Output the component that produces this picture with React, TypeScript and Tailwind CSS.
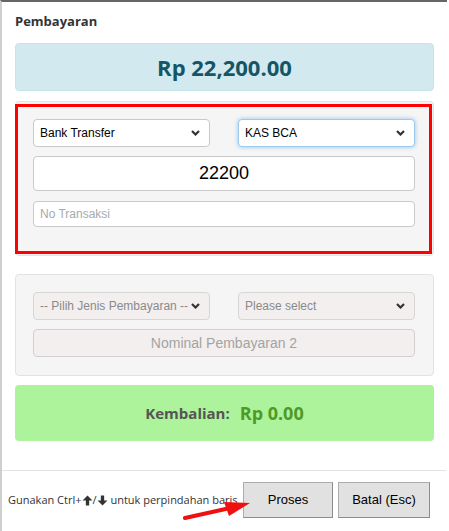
import { ReactNode } from "react";

const arial = { fontFamily: '"Liberation Sans", Arial, sans-serif' };

function Chevron() {
  return (
    <svg width="9" height="6" viewBox="0 0 9 6" className="shrink-0">
      <path d="M1 1l3.5 3.5L8 1" fill="none" stroke="#333" strokeWidth="2.2" />
    </svg>
  );
}

function FakeSelect({
  children,
  disabled,
  focused,
}: {
  children: ReactNode;
  disabled?: boolean;
  focused?: boolean;
}) {
  return (
    <div
      style={arial}
      className={
        "h-[28px] flex items-center justify-between pl-[6px] pr-[9px] rounded-[4px] border text-[12px] " +
        (disabled
          ? "bg-[#f2efee] border-[#d6d6d6] text-[#8a8a8a]"
          : focused
          ? "bg-white border-[#9ecaed] shadow-[0_0_4px_rgba(102,175,233,0.7)] text-black"
          : "bg-white border-[#c9c9c9] text-black")
      }
    >
      <span>{children}</span>
      <Chevron />
    </div>
  );
}

export default function App() {
  return (
    <div className="relative w-[449px] h-[531px] overflow-hidden bg-white">
      <div className="w-[447px] h-[531px] border-t-2 border-t-[#666] border-l-2 border-l-[#cfcfcf] flex flex-col">
        {/* Body */}
        <div className="px-[13px] pt-[9px]">
          <h4
            className="h-[20px] leading-[20px] text-[13px] font-bold text-[#333]"
            style={{ fontFamily: '"Open Sans", sans-serif' }}
          >
            Pembayaran
          </h4>

          <div
            className="mt-[12px] h-[48px] rounded-[4px] border border-[#c6e4eb] bg-[#d1e9ef] flex items-center justify-center text-[22px] font-bold text-[#155565]"
            style={{ fontFamily: '"Open Sans", sans-serif' }}
          >
            Rp 22,200.00
          </div>

          {/* Payment 1 */}
          <div className="mt-[10px] rounded-[4px] border border-[#e3e3e3] bg-[#f5f5f5] pt-[2px] pr-px pb-px">
            <div className="-ml-px border-[3px] border-[#ff0000] pt-[12px] pl-[15px] pr-[14px] pb-[24px]">
              <div className="grid grid-cols-2 gap-x-[28px]">
                <FakeSelect>Bank Transfer</FakeSelect>
                <FakeSelect focused>KAS BCA</FakeSelect>
              </div>
              <div
                style={arial}
                className="mt-[9px] h-[35px] rounded-[4px] border border-[#c9c9c9] bg-white flex items-center justify-center text-[18px] text-black"
              >
                22200
              </div>
              <div
                style={arial}
                className="mt-[10px] h-[26px] rounded-[4px] border border-[#c9c9c9] bg-white flex items-center pl-[6px] text-[12px] text-[#a9a9a9]"
              >
                No Transaksi
              </div>
            </div>
          </div>

          {/* Payment 2 */}
          <div className="mt-[18px] rounded-[4px] border border-[#e3e3e3] bg-[#f5f5f5] pt-[17px] pl-[17px] pr-[18px] pb-[18px]">
            <div className="grid grid-cols-2 gap-x-[28px]">
              <FakeSelect disabled>-- Pilih Jenis Pembayaran --</FakeSelect>
              <FakeSelect disabled>Please select</FakeSelect>
            </div>
            <div
              style={arial}
              className="mt-[9px] h-[28px] rounded-[4px] border border-[#d0d0d0] bg-[#f2efee] flex items-center justify-center text-[14px] text-[#a3a3a3]"
            >
              Nominal Pembayaran 2
            </div>
          </div>

          {/* Change */}
          <div
            className="mt-[9px] h-[56px] rounded-[4px] bg-[#acf39b] flex items-center justify-center gap-[10px] font-bold"
            style={{ fontFamily: '"Open Sans", sans-serif' }}
          >
            <span className="text-[15px] text-[#555]">Kembalian:</span>
            <span className="text-[18px] text-[#4f9a26]">Rp 0.00</span>
          </div>
        </div>

        {/* Footer */}
        <div className="mt-[29px] mr-[1px] border-t border-[#e3e3e3] pt-[11px] pl-[6px] pr-[16px] flex items-center">
          <span
            className="text-[11px] text-[#333] flex items-center whitespace-nowrap"
            style={{ fontFamily: '"Open Sans", sans-serif' }}
          >
            Gunakan Ctrl+
            <svg width="11" height="11" viewBox="0 0 10 10">
              <path d="M5 0.5L9.5 5H6.5v4.5h-3V5H0.5z" fill="#333" />
            </svg>
            /
            <svg width="11" height="11" viewBox="0 0 10 10">
              <path d="M5 9.5L9.5 5H6.5V0.5h-3V5H0.5z" fill="#333" />
            </svg>
            &nbsp;untuk perpindahan baris
          </span>
          <div className="ml-auto flex gap-[5px]" style={arial}>
            <button className="w-[90px] h-[36px] bg-[#e1e1e1] border border-[#adadad] border-r-[#8c8c8c] border-b-[#8c8c8c] text-[13px] text-black">
              Proses
            </button>
            <button className="w-[92px] h-[36px] bg-[#e1e1e1] border border-[#adadad] border-r-[#8c8c8c] border-b-[#8c8c8c] text-[13px] text-black">
              Batal (Esc)
            </button>
          </div>
        </div>
      </div>

      {/* Red annotation arrow */}
      <svg
        className="absolute left-[180px] top-[495px]"
        width="80"
        height="30"
        viewBox="0 0 80 30"
      >
        <path d="M5 23 L50 13" stroke="#f01010" strokeWidth="4" strokeLinecap="round" />
        <path d="M44 7 L70 8 L49 21 Z" fill="#f01010" />
      </svg>
    </div>
  );
}
